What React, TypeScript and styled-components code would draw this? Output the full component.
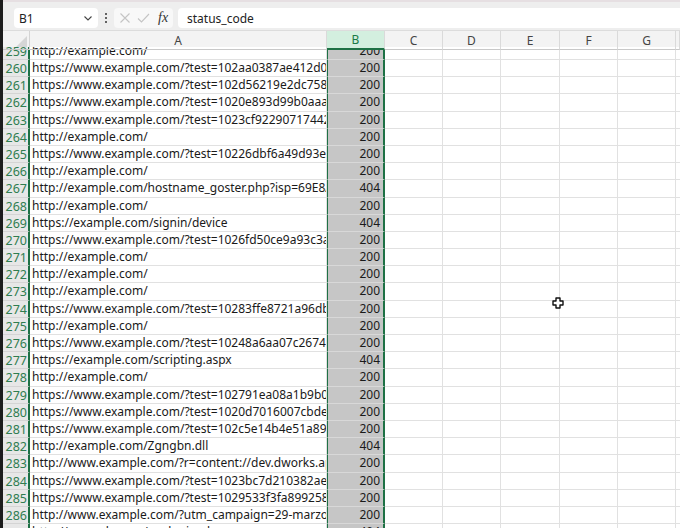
import React from "react";
import styled, { createGlobalStyle } from "styled-components";

const GlobalStyle = createGlobalStyle`
  html, body {
    margin: 0;
    padding: 0;
    width: 680px;
    height: 528px;
    overflow: hidden;
    background: #ffffff;
  }
  * { box-sizing: border-box; }
`;

const COLS = "27px 297px 58px 58px 58px 59px 58px 58px 1fr";
const GREEN = "#1e7145";
const ROW_H = 17.2;

const Frame = styled.div`
  width: 680px;
  height: 528px;
  display: flex;
  flex-direction: column;
  border-left: 3px solid #1c1c1c;
  font-family: "Noto Sans", "Open Sans", sans-serif;
  overflow: hidden;
`;

const Toolbar = styled.div`
  height: 30px;
  flex: none;
  display: flex;
  align-items: flex-start;
  padding: 6px 0 0 11px;
  background: #eeeeee;
  border-top: 2px solid #e6dfe2;
`;

const NameBox = styled.div`
  width: 84px;
  height: 20px;
  background: #ffffff;
  border-radius: 4px;
  display: flex;
  align-items: center;
  justify-content: space-between;
  padding: 0 5px;
  font-size: 12px;
  color: #222;
`;

const Kebab = styled.div`
  width: 16px;
  height: 20px;
  display: flex;
  flex-direction: column;
  align-items: center;
  justify-content: center;
  gap: 2px;
  span {
    width: 2px;
    height: 2px;
    border-radius: 1px;
    background: #333;
  }
`;

const FuncBox = styled.div`
  width: 59px;
  height: 20px;
  background: #f8f8f8;
  border-radius: 4px;
  display: flex;
  align-items: center;
  gap: 6px;
  padding: 0 4px 0 5px;
`;

const Fx = styled.span`
  font-family: "Liberation Serif", serif;
  font-style: italic;
  font-size: 14px;
  color: #333;
  margin-left: 2px;
`;

const FormulaInput = styled.div`
  flex: 1;
  height: 20px;
  margin-left: 5px;
  background: #ffffff;
  border-radius: 4px 0 0 4px;
  display: flex;
  align-items: center;
  padding-left: 9px;
  font-size: 12px;
  color: #222;
`;

const HeaderRow = styled.div`
  flex: none;
  display: grid;
  grid-template-columns: ${COLS};
  height: 17px;
  background: #f3f3f3;
  border-top: 1px solid #dcdcdc;
  position: relative;
  z-index: 2;
`;

const Corner = styled.div`
  position: relative;
  border-right: 1px solid #d4d4d4;
  border-bottom: 1px solid #c8c8c8;
  &::after {
    content: "";
    position: absolute;
    right: 2px;
    bottom: 2px;
    border-style: solid;
    border-width: 0 0 11px 11px;
    border-color: transparent transparent #d6d6d6 transparent;
  }
`;

const ColHead = styled.div<{ $selected?: boolean }>`
  display: flex;
  align-items: center;
  justify-content: center;
  font-size: 12px;
  color: ${(p) => (p.$selected ? "#1a7a46" : "#444")};
  background: ${(p) => (p.$selected ? "#d3efdf" : "transparent")};
  border-right: 1px solid #dadada;
  border-bottom: ${(p) => (p.$selected ? `2px solid ${GREEN}` : "1px solid #c8c8c8")};
`;

const Body = styled.div`
  flex: 1;
  overflow: hidden;
  position: relative;
`;

const Rows = styled.div`
  margin-top: -4.2px;
`;

const Row = styled.div`
  display: grid;
  grid-template-columns: ${COLS};
  height: ${ROW_H}px;
`;

const RowNum = styled.div`
  background: #e7e7e7;
  color: #2f7d50;
  font-size: 12.5px;
  text-align: right;
  padding-right: 1px;
  line-height: ${ROW_H}px;
  border-right: 2px solid ${GREEN};
  border-bottom: 1px solid #d4d4d4;
  overflow: hidden;
`;

const Cell = styled.div<{ $selected?: boolean; $num?: boolean }>`
  font-size: 12px;
  line-height: ${ROW_H - 1}px;
  color: #1a1a1a;
  white-space: nowrap;
  overflow: hidden;
  padding: 0 ${(p) => (p.$num ? "3px" : "2px")} 0 2px;
  text-align: ${(p) => (p.$num ? "right" : "left")};
  background: ${(p) => (p.$selected ? "#c6c6c6" : "#ffffff")};
  border-bottom: 1px solid ${(p) => (p.$selected ? "#d8d8d8" : "#e1e1e1")};
  border-right: ${(p) => (p.$selected ? `2px solid ${GREEN}` : "1px solid #e1e1e1")};
  border-left: ${(p) => (p.$selected ? `1px solid ${GREEN}` : "none")};
`;

const Cursor = styled.svg`
  position: absolute;
  left: 549px;
  top: 250px;
`;

const rows: [number, string, string][] = [
  [259, "http://example.com/", "200"],
  [260, "https://www.example.com/?test=102aa0387ae412d0f1c9", "200"],
  [261, "https://www.example.com/?test=102d56219e2dc758a0e4", "200"],
  [262, "https://www.example.com/?test=1020e893d99b0aaa7c31", "200"],
  [263, "https://www.example.com/?test=1023cf922907174425b8", "200"],
  [264, "http://example.com/", "200"],
  [265, "https://www.example.com/?test=10226dbf6a49d93e5f02", "200"],
  [266, "http://example.com/", "200"],
  [267, "http://example.com/hostname_goster.php?isp=69E8A1", "404"],
  [268, "http://example.com/", "200"],
  [269, "https://example.com/signin/device", "404"],
  [270, "https://www.example.com/?test=1026fd50ce9a93c3a8e1", "200"],
  [271, "http://example.com/", "200"],
  [272, "http://example.com/", "200"],
  [273, "http://example.com/", "200"],
  [274, "https://www.example.com/?test=10283ffe8721a96db3c7", "200"],
  [275, "http://example.com/", "200"],
  [276, "https://www.example.com/?test=10248a6aa07c2674e9d0", "200"],
  [277, "https://example.com/scripting.aspx", "404"],
  [278, "http://example.com/", "200"],
  [279, "https://www.example.com/?test=102791ea08a1b9b0c5f3", "200"],
  [280, "https://www.example.com/?test=1020d7016007cbde41a2", "200"],
  [281, "https://www.example.com/?test=102c5e14b4e51a890d7e", "200"],
  [282, "http://example.com/Zgngbn.dll", "404"],
  [283, "http://www.example.com/?r=content://dev.dworks.apps", "200"],
  [284, "https://www.example.com/?test=1023bc7d210382ae6f14", "200"],
  [285, "https://www.example.com/?test=1029533f3fa899258b0c", "200"],
  [286, "http://www.example.com/?utm_campaign=29-marzo-2023", "200"],
  [287, "http://example.com/wp-login.php", "404"],
];

const letters = ["A", "B", "C", "D", "E", "F", "G", ""];

export default function App() {
  return (
    <>
      <GlobalStyle />
      <Frame>
        <Toolbar>
          <NameBox>
            <span>B1</span>
            <svg width="10" height="10" viewBox="0 0 10 10">
              <path d="M1.5 3.5 L5 7 L8.5 3.5" stroke="#444" strokeWidth="1.1" fill="none" />
            </svg>
          </NameBox>
          <Kebab>
            <span />
            <span />
            <span />
          </Kebab>
          <FuncBox>
            <svg width="12" height="12" viewBox="0 0 12 12">
              <path d="M1.5 1.5 L10.5 10.5 M10.5 1.5 L1.5 10.5" stroke="#c4c4c4" strokeWidth="1.1" />
            </svg>
            <svg width="13" height="12" viewBox="0 0 13 12">
              <path d="M1 6.5 L4.5 10 L12 2" stroke="#c4c4c4" strokeWidth="1.1" fill="none" />
            </svg>
            <Fx>fx</Fx>
          </FuncBox>
          <FormulaInput>status_code</FormulaInput>
        </Toolbar>
        <HeaderRow>
          <Corner />
          {letters.map((l, i) => (
            <ColHead key={i} $selected={l === "B"}>
              {l}
            </ColHead>
          ))}
        </HeaderRow>
        <Body>
          <Rows>
            {rows.map(([n, url, code]) => (
              <Row key={n}>
                <RowNum>{n}</RowNum>
                <Cell>{url}</Cell>
                <Cell $selected $num>
                  {code}
                </Cell>
                <Cell />
                <Cell />
                <Cell />
                <Cell />
                <Cell />
                <Cell />
              </Row>
            ))}
          </Rows>
          <Cursor width="12" height="12" viewBox="0 0 12 12">
            <path
              d="M4 1 H8 V4 H11 V8 H8 V11 H4 V8 H1 V4 H4 Z"
              fill="#ffffff"
              stroke="#111"
              strokeWidth="1.4"
              strokeLinejoin="round"
            />
          </Cursor>
        </Body>
      </Frame>
    </>
  );
}
